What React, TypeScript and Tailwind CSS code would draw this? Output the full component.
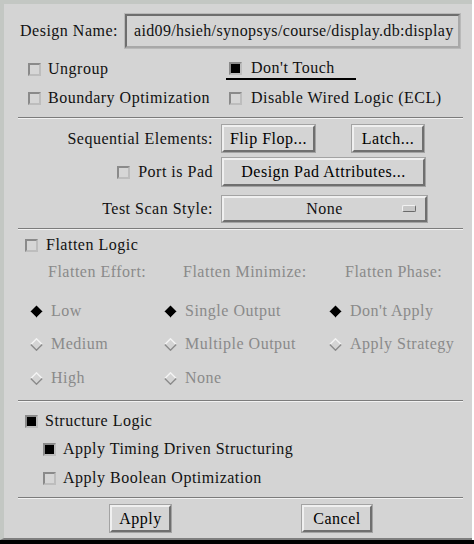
import React from 'react';

const Check = ({ on = false }: { on?: boolean }) => (
  <span
    className={`inline-block w-[13px] h-[13px] shrink-0 border-2 border-t-[#8a8a8a] border-l-[#8a8a8a] border-b-[#bdbdbd] border-r-[#bdbdbd] ${
      on ? 'bg-black' : 'bg-[#d6d6d6]'
    }`}
  />
);

const Diamond = ({ on = false }: { on?: boolean }) => (
  <svg width="13" height="13" viewBox="0 0 13 13" className="shrink-0">
    {on ? (
      <>
        <polygon points="6.5,0.5 12.5,6.5 6.5,12.5 0.5,6.5" fill="#000" />
        <polyline points="0.5,6.5 6.5,12.5 12.5,6.5" fill="none" stroke="#9a9a9a" strokeWidth="1" />
      </>
    ) : (
      <>
        <polyline points="0.8,6.5 6.5,0.8 12.2,6.5" fill="none" stroke="#f4f4f4" strokeWidth="1.4" />
        <polyline points="0.8,6.5 6.5,12.2 12.2,6.5" fill="none" stroke="#8a8a8a" strokeWidth="1.4" />
      </>
    )}
  </svg>
);

const Btn = ({ label, w, h = 27 }: { label: string; w: string; h?: number }) => (
  <div
    className={`${w} ${h === 28 ? 'h-[28px]' : 'h-[27px]'} flex items-center justify-center border-2 border-t-[#f0f0f0] border-l-[#f0f0f0] border-b-[#6f6f6f] border-r-[#6f6f6f] shadow-[0_0_0_1px_#a3a3a3] bg-[#d4d4d4] text-black`}
  >
    {label}
  </div>
);

const Sep = () => (
  <div className="ml-[14px] w-[445px] h-[2px] border-t border-t-[#7c7c7c] border-b border-b-[#f2f2f2]" />
);

const dim = 'text-[#8a8a8a]';

export default function App() {
  const radios = [
    [
      { t: 'Low', on: true },
      { t: 'Single Output', on: true },
      { t: "Don't Apply", on: true },
    ],
    [
      { t: 'Medium', on: false },
      { t: 'Multiple Output', on: false },
      { t: 'Apply Strategy', on: false },
    ],
    [
      { t: 'High', on: false },
      { t: 'None', on: false },
      null,
    ],
  ];

  return (
    <div
      className="w-[474px] h-[544px] bg-white text-[16px] tracking-[0.5px] leading-none text-[#111]"
      style={{ fontFamily: '"Liberation Serif", "DejaVu Serif", serif' }}
    >
      <div className="w-[472px] h-[540px] bg-[#d4d4d4] border-t-4 border-l-4 border-t-[#c3c7c3] border-l-[#c3c7c3] border-b-2 border-b-[#7e7e7e] flex flex-col">
        {/* design name */}
        <div className="mt-[10px] h-[34px] flex items-center">
          <span className="pl-[16px] w-[121px] shrink-0">Design Name:</span>
          <div className="w-[335px] h-[34px] flex items-center pl-[7px] border-2 border-t-[#6e6e6e] border-l-[#6e6e6e] border-b-[#a8a8a8] border-r-[#a8a8a8] shadow-[0_0_0_1px_#b9b9b9] overflow-hidden whitespace-nowrap tracking-[0.35px]">
            aid09/hsieh/synopsys/course/display.db:display
          </div>
        </div>

        {/* options */}
        <div className="mt-[10px] h-[22px] flex items-center pl-[24px]">
          <div className="w-[198px] flex items-center gap-[7px]">
            <Check />
            <span>Ungroup</span>
          </div>
          <div className="w-[130px] h-[22px] pl-[3px] flex items-center gap-[9px] border-b-2 border-b-black">
            <Check on />
            <span>Don't Touch</span>
          </div>
        </div>
        <div className="mt-[7px] h-[22px] flex items-center pl-[24px]">
          <div className="w-[201px] flex items-center gap-[7px]">
            <Check />
            <span>Boundary Optimization</span>
          </div>
          <div className="flex items-center gap-[9px]">
            <Check />
            <span>Disable Wired Logic (ECL)</span>
          </div>
        </div>

        <div className="mt-[8px]">
          <Sep />
        </div>

        {/* sequential */}
        <div className="mt-[6px] h-[27px] flex items-center">
          <span className="w-[209px] text-right shrink-0">Sequential Elements:</span>
          <div className="ml-[9px]">
            <Btn label="Flip Flop..." w="w-[93px]" />
          </div>
          <div className="ml-[37px]">
            <Btn label="Latch..." w="w-[72px]" />
          </div>
        </div>
        <div className="mt-[6px] h-[28px] flex items-center">
          <div className="w-[209px] shrink-0 flex items-center justify-end gap-[8px]">
            <Check />
            <span>Port is Pad</span>
          </div>
          <div className="ml-[9px]">
            <Btn label="Design Pad Attributes..." w="w-[203px]" h={28} />
          </div>
        </div>
        <div className="mt-[10px] h-[26px] flex items-center">
          <span className="w-[209px] text-right shrink-0">Test Scan Style:</span>
          <div className="ml-[9px] w-[205px] h-[26px] relative flex items-center justify-center border-2 border-t-[#f0f0f0] border-l-[#f0f0f0] border-b-[#6f6f6f] border-r-[#6f6f6f] shadow-[0_0_0_1px_#a3a3a3]">
            <span>None</span>
            <span className="absolute right-[9px] top-[7px] w-[14px] h-[7px] rounded-[2px] border border-t-[#f2f2f2] border-l-[#f2f2f2] border-b-[#6a6a6a] border-r-[#6a6a6a] bg-[#c8c8c8]" />
          </div>
        </div>

        <div className="mt-[6px]">
          <Sep />
        </div>

        {/* flatten */}
        <div className="mt-[5px] h-[20px] flex items-center pl-[21px] gap-[8px]">
          <Check />
          <span>Flatten Logic</span>
        </div>
        <div className={`mt-[7px] h-[20px] grid grid-cols-[134px_165px_1fr] items-center pl-[26px] ${dim}`}>
          <span className="pl-[18px]">Flatten Effort:</span>
          <span className="pl-[19px]">Flatten Minimize:</span>
          <span className="pl-[16px]">Flatten Phase:</span>
        </div>
        {radios.map((row, i) => (
          <div
            key={i}
            className={`${i === 0 ? 'mt-[19px]' : i === 1 ? 'mt-[13px]' : 'mt-[14px]'} h-[20px] grid grid-cols-[134px_165px_1fr] items-center pl-[26px] ${dim}`}
          >
            {row.map((r, j) =>
              r ? (
                <div key={j} className="flex items-center gap-[8px]">
                  <Diamond on={r.on} />
                  <span>{r.t}</span>
                </div>
              ) : (
                <div key={j} />
              )
            )}
          </div>
        ))}

        <div className="mt-[12px]">
          <Sep />
        </div>

        {/* structure */}
        <div className="mt-[9px] h-[20px] flex items-center pl-[21px] gap-[7px]">
          <Check on />
          <span>Structure Logic</span>
        </div>
        <div className="mt-[8px] h-[20px] flex items-center pl-[39px] gap-[7px]">
          <Check on />
          <span>Apply Timing Driven Structuring</span>
        </div>
        <div className="mt-[9px] h-[20px] flex items-center pl-[39px] gap-[7px]">
          <Check />
          <span>Apply Boolean Optimization</span>
        </div>

        <div className="mt-[9px]">
          <Sep />
        </div>

        <div className="mt-[6px] h-[27px] flex items-center pl-[106px]">
          <Btn label="Apply" w="w-[61px]" />
          <div className="ml-[131px]">
            <Btn label="Cancel" w="w-[70px]" />
          </div>
        </div>
      </div>
      <div className="h-[4px] bg-black" />
    </div>
  );
}
